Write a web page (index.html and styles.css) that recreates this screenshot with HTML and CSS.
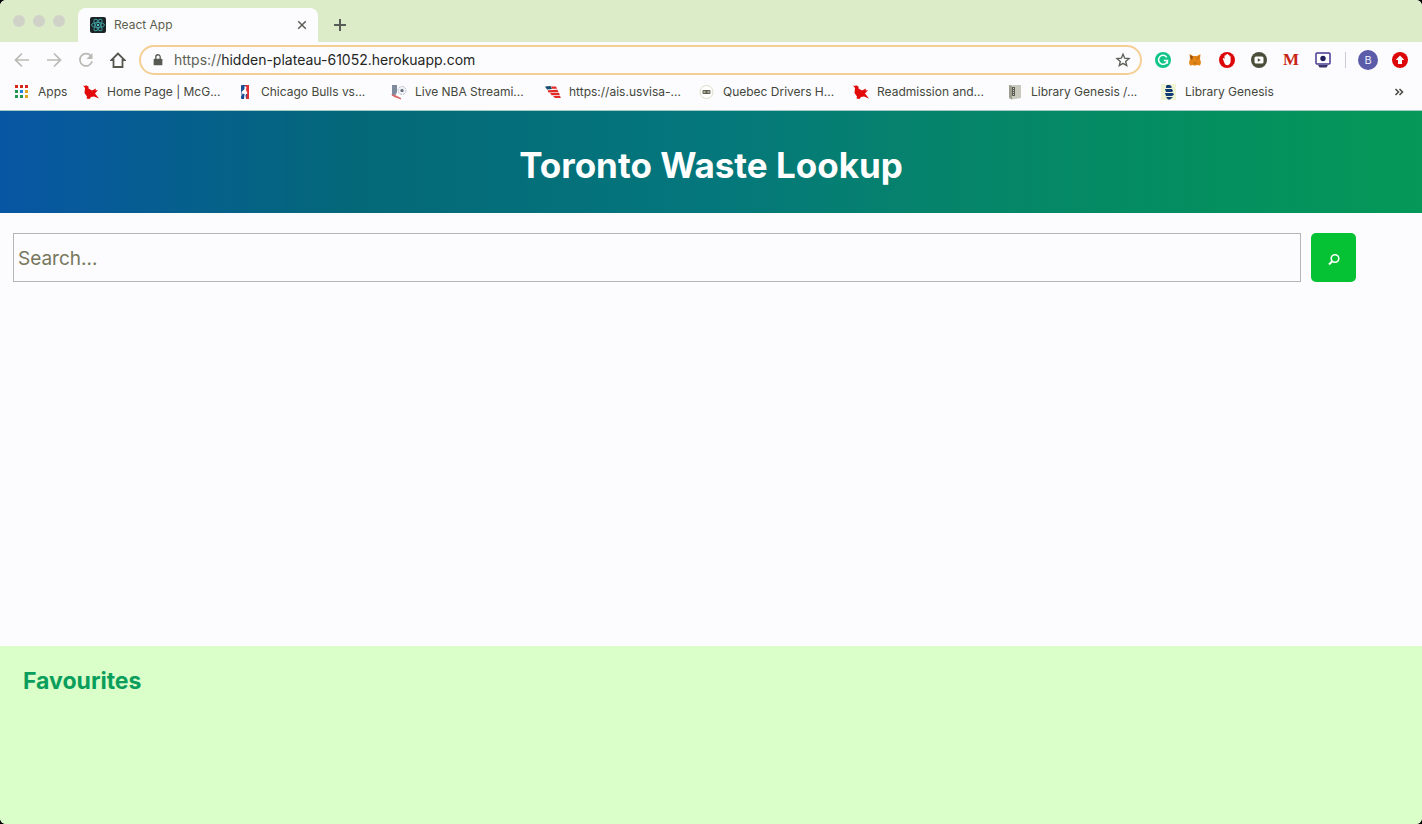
FILE: index.html
```html
<!DOCTYPE html>
<html lang="en">
<head>
<meta charset="utf-8">
<title>React App</title>
<link rel="stylesheet" href="styles.css">
</head>
<body>
<div class="window">
  <div class="tabstrip">
    <div class="lights"><span class="light"></span><span class="light"></span><span class="light"></span></div>
    <div class="tab">
      <svg class="icon" viewBox="0 0 16 16"><rect width="16" height="16" rx="2" fill="#1c2427"/><g fill="none" stroke="#3f9a9c"><ellipse cx="8" cy="8" rx="6.5" ry="2.5"/><ellipse cx="8" cy="8" rx="6.5" ry="2.5" transform="rotate(60 8 8)"/><ellipse cx="8" cy="8" rx="6.5" ry="2.5" transform="rotate(120 8 8)"/></g><circle cx="8" cy="8" r="1.2" fill="#4fc3c8"/></svg>
      <span class="tab-title">React App</span>
      <button class="plain" aria-label="Close tab"><svg class="icon" viewBox="0 0 16 16"><path d="M4.2 4.2l7.6 7.6M11.8 4.2l-7.6 7.6" stroke="#5c5f58" stroke-width="1.5"/></svg></button>
    </div>
    <button class="plain new-tab" aria-label="New tab"><svg class="icon" viewBox="0 0 16 16"><path d="M8 2v12M2 8h12" stroke="#5a5d57" stroke-width="2"/></svg></button>
  </div>
  <div class="toolbar">
    <div class="nav">
      <button class="plain" aria-label="Back"><svg class="icon" viewBox="0 0 16 16"><path d="M15 8H2M8 1.5L1.5 8 8 14.5" fill="none" stroke="#b9bab4" stroke-width="1.7"/></svg></button>
      <button class="plain" aria-label="Forward"><svg class="icon" viewBox="0 0 16 16"><path d="M1 8h13M8 1.5L14.5 8 8 14.5" fill="none" stroke="#b9bab4" stroke-width="1.7"/></svg></button>
      <button class="plain" aria-label="Reload"><svg class="icon" viewBox="0 0 16 16"><path d="M13.2 4.2A6.2 6.2 0 1 0 14.1 9.3" fill="none" stroke="#b9bab4" stroke-width="1.7"/><path d="M14.5 1v6h-6z" fill="#b9bab4"/></svg></button>
      <button class="plain" aria-label="Home"><svg class="icon" viewBox="0 0 16 16"><path d="M8 1.5L1.5 8H3.5V15h9V8h2z" fill="none" stroke="#55584f" stroke-width="1.8"/></svg></button>
    </div>
    <div class="address">
      <svg class="lock" viewBox="0 0 16 16"><rect x="3" y="6.5" width="10" height="7.5" rx="1" fill="#575a53"/><path d="M5.500 7V4.500a2.500 2.500 0 0 1 5 0V7" fill="none" stroke="#575a53" stroke-width="1.500"/></svg>
      <div class="url"><span class="scheme">https://</span>hidden-plateau-61052.herokuapp.com</div>
      <button class="plain" aria-label="Bookmark this page"><svg class="icon" viewBox="0 0 16 16"><path d="M8 2.200l1.700 4 4.300.4-3.300 2.800 1 4.200L8 11.400l-3.700 2.200 1-4.200L2 6.600l4.300-.4z" fill="none" stroke="#5e6158" stroke-width="1.400"/></svg></button>
    </div>
    <div class="extensions">
      <svg class="icon" viewBox="0 0 16 16"><circle cx="8" cy="8" r="8" fill="#11c488"/><path d="M11.8 5.3A4.500 4.500 0 1 0 12.500 8.600H8.800M12.400 8.600v3.100" fill="none" stroke="#fff" stroke-width="1.500"/></svg>
      <svg class="icon" viewBox="0 0 16 16"><path d="M2.500 2L6 4h4l3.500-2-.5 5 1 3.500-1 3-3-.5-1 .5H7L6 13l-3 .5-1-3L3 7z" fill="#e38516"/><path d="M3 3l3 1.500L5 8 3.500 6z" fill="#925015"/><path d="M12 4.500L10 7.500M6.500 11h3" stroke="#a8621a" fill="none"/></svg>
      <svg class="icon" viewBox="0 0 16 16"><circle cx="8" cy="8" r="8" fill="#dc0709"/><path d="M4.500 8.500l-.8-2 1-.5.8 1.200V3.500h1.200V2.500H8v-.5h1.200v1h1.200v1.200h1.200v5c0 2-1.300 4-3.500 4-1.700 0-2.800-1.500-3.600-4.700z" fill="#fff"/></svg>
      <svg class="icon" viewBox="0 0 16 16"><circle cx="8" cy="8" r="8" fill="#4b4e3b"/><rect x="3.5" y="4.5" width="9" height="7" rx="1.5" fill="#fff"/><path d="M6.800 6.200v3.600L9.800 8z" fill="#4b4e3b"/></svg>
      <span class="letter-m">M</span>
      <svg class="icon" viewBox="0 0 16 16"><rect x="1" y="1" width="14" height="11" rx="1" fill="#fff" stroke="#453a91" stroke-width="1.5"/><circle cx="8" cy="6.5" r="2.7" fill="#22215d"/><path d="M3 13h10l-1.500 2.500h-7z" fill="#37356b"/></svg>
      <span class="divider"></span>
      <span class="avatar">B</span>
      <svg class="icon" viewBox="0 0 16 16"><circle cx="8" cy="8" r="8" fill="#dc0709"/><path d="M8 3.500L12.300 8H10v4H6V8H3.700z" fill="#fff"/></svg>
    </div>
  </div>
  <nav class="bookmarks" aria-label="Bookmarks">
    <a class="bookmark apps" href="#"><svg class="icon" viewBox="0 0 16 16"><path d="M1 1h3v3H1zM6 1h3v3H6zM11 1h3v3h-3z" fill="#d7251c"/><path d="M1 6h3v3H1zM1 11h3v3H1zM6 11h3v3H6z" fill="#249451"/><path d="M6 6h3v3H6z" fill="#2086d8"/><path d="M11 6h3v3h-3zM11 11h3v3h-3z" fill="#e0a51f"/></svg>Apps</a>
    <a class="bookmark" href="#"><svg class="icon" viewBox="0 0 16 16"><path d="M0 1.500l2 .5 1-.8L5.500 2.500v2L9 6.500l4-2-.5 2 2.500-.5-3 3.500 4 5-5-2-3 .5-1.500 2-3-.5.500-2L1.500 9 2 4z" fill="#e20a0a"/></svg><span>Home Page | McG...</span></a>
    <a class="bookmark" href="#"><svg class="icon" viewBox="0 0 16 16"><rect x="4" y="1" width="8" height="14" rx="1" fill="#164c91"/><path d="M8 1h4v14h-3l1-5-3-2 2-4z" fill="#de3035"/><path d="M7.500 2l2 1-.5 3 1.500 3-2 2 .5 4H7l.5-5-2-.5-1 3.500V8l3-3z" fill="#fff"/></svg><span>Chicago Bulls vs...</span></a>
    <a class="bookmark" href="#"><svg class="icon" viewBox="0 0 16 16"><path d="M1 1h5v7L4 12H1z" fill="#7d8b9c"/><path d="M0 10l4 1 6 3v1.500L3 13z" fill="#df6868"/><circle cx="11" cy="6.500" r="4" fill="#f1f3f6" stroke="#b5bac4" stroke-dasharray="2 1"/><path d="M11 4.800l1.800 1.300-.7 2h-2.200l-.7-2z" fill="#677181"/></svg><span>Live NBA Streami...</span></a>
    <a class="bookmark" href="#"><svg class="icon" viewBox="0 0 16 16"><path d="M0 2.500l5.500-.5 1.500 3-5 .5z" fill="#164a6c"/><path d="M6 2.500h5l1 2.200H7zM2.500 6.200l10-.4 1 2.200-10 .4zM5 9l9-.3.8 2.300-8.300.3zM8 12l7-.2.8 2.200H10z" fill="#e12c25"/></svg><span>https://ais.usvisa-...</span></a>
    <a class="bookmark" href="#"><svg class="icon" viewBox="0 0 16 16"><circle cx="7.500" cy="8" r="6.500" fill="#fff" stroke="#dcdcc8"/><rect x="3.500" y="6" width="8" height="4" rx="1" fill="#62614f"/><path d="M4.500 8h2M8.500 8h2" stroke="#fff"/></svg><span>Quebec Drivers H...</span></a>
    <a class="bookmark" href="#"><svg class="icon" viewBox="0 0 16 16"><path d="M0 1.500l2 .5 1-.8L5.500 2.500v2L9 6.500l4-2-.5 2 2.500-.5-3 3.500 4 5-5-2-3 .5-1.500 2-3-.5.500-2L1.500 9 2 4z" fill="#e20a0a"/></svg><span>Readmission and...</span></a>
    <a class="bookmark" href="#"><svg class="icon" viewBox="0 0 16 16"><path d="M2 1h12v13l-9 1.500L2 14z" fill="#c9c9bd"/><path d="M2 1l3 1v13.500L2 14z" fill="#9d9e8f"/><path d="M5 3h3v9H5z" fill="#5c5e53"/><path d="M6.500 4v7" stroke="#c9c9bd" stroke-dasharray="1 1"/></svg><span>Library Genesis /...</span></a>
    <a class="bookmark" href="#"><svg class="icon" viewBox="0 0 16 16"><path d="M0 0h15v16H0z" fill="#eef3d2"/><path d="M6 1h3l2 2-1 1H5V2zM4 5h7l1 2-1 1H5zM4 9h8l1 1.500L11 12H5zM5 13h7l-3 2.500H7z" fill="#123c78"/></svg><span>Library Genesis</span></a>
    <button class="plain more" aria-label="More bookmarks"><svg class="icon" viewBox="0 0 16 16"><path d="M3.500 5l3 3-3 3M7.500 5l3 3-3 3" fill="none" stroke="#4b4e45" stroke-width="1.600"/></svg></button>
  </nav>
  <header class="banner"><h1>Toronto Waste Lookup</h1></header>
  <main class="content">
    <form class="search">
      <input class="search-box" type="text" placeholder="Search..." aria-label="Search">
      <button class="search-button" type="button" aria-label="Search"><svg class="icon" viewBox="0 0 16 16"><circle cx="9" cy="6.500" r="3.800" fill="none" stroke="#fff" stroke-width="1.600"/><path d="M6.500 9L3 12.500" stroke="#fff" stroke-width="2"/></svg></button>
    </form>
  </main>
  <section class="favourites"><h2>Favourites</h2></section>
</div>
</body>
</html>
```
FILE: styles.css
```css
* { box-sizing: border-box; }
body { margin: 0; background: #000; font-family: Inter, "Liberation Sans", sans-serif; }
.window { display: flex; flex-direction: column; min-height: 100vh; background: #fcfcff; border-radius: 6px; overflow: hidden; }
.icon { display: block; flex: none; width: 16px; height: 16px; }
.plain { flex: none; padding: 0; border: 0; background: none; }
.tabstrip { display: flex; align-items: flex-end; height: 42px; background: #dcecc8; }
.lights { display: flex; gap: 8px; width: 78px; padding: 0 0 15px 13px; }
.light { width: 12px; height: 12px; border-radius: 50%; background: #d0d2c8; }
.tab { display: flex; align-items: center; gap: 8px; width: 240px; height: 34px; padding: 0 8px 0 12px; border-radius: 8px 8px 0 0; background: #fcfcff; }
.tab-title { flex: 1; padding-bottom: 1px; font-size: 12px; color: #5c5f4c; }
.new-tab { padding: 0 0 9px 14px; }
.toolbar { display: flex; align-items: center; height: 36px; padding: 0 14px; }
.nav { display: flex; gap: 16px; }
.address { display: flex; align-items: center; flex: 1; height: 30px; margin: 0 13px; padding: 0 9px 0 10px; border: 2px solid #f4cf94; border-radius: 15px; }
.lock { flex: none; width: 14px; height: 14px; }
.url { flex: 1; padding: 0 0 2px 9px; font-size: 14px; color: #24261e; }
.scheme { color: #5e6156; }
.extensions { display: flex; align-items: center; gap: 16px; }
.letter-m { width: 16px; text-align: center; font: bold 17px/16px "Liberation Serif", serif; color: #c82412; }
.divider { width: 1px; height: 16px; margin: 0 -2px; background: #c9cad2; }
.avatar { width: 20px; height: 20px; margin: 0 -2px; border-radius: 50%; background: #5b5baa; color: #e8e8f8; font-size: 11px; line-height: 20px; text-align: center; }
.bookmarks { display: flex; align-items: center; height: 33px; padding: 0 14px 5px; border-bottom: 1px solid #a4ccc4; }
.bookmark { display: flex; align-items: center; gap: 8px; width: 154px; font-size: 12px; color: #44473b; text-decoration: none; white-space: nowrap; }
.apps { width: 69px; }
.more { margin-left: auto; }
.banner { display: flex; align-items: center; justify-content: center; height: 102px; padding-top: 6px; background: linear-gradient(to right, #0756a4 0%, #046878 25%, #04777c 50%, #06836c 65%, #048c62 80%, #059858 100%); }
.banner h1 { margin: 0; font-size: 35px; line-height: 44px; font-weight: 700; color: #fff; }
.content { flex: 1; padding: 20px 66px 20px 13px; }
.search { display: flex; gap: 10px; }
.search-box { flex: 1; min-width: 0; height: 49px; padding: 3px 4px 1px; border: 1px solid #b5b5b8; background: transparent; font-family: inherit; font-size: 19px; color: #333; }
.search-box::placeholder { color: #77775c; opacity: 1; }
.search-button { display: flex; align-items: center; justify-content: center; width: 45px; height: 49px; padding: 4px 0 0; border: 0; border-radius: 5px; background: #04c234; }
.favourites { min-height: 178px; padding: 20px 23px; background: #daffc8; }
.favourites h2 { margin: 0; font-size: 23px; line-height: 30px; font-weight: 700; color: #0a9e5c; }
```
